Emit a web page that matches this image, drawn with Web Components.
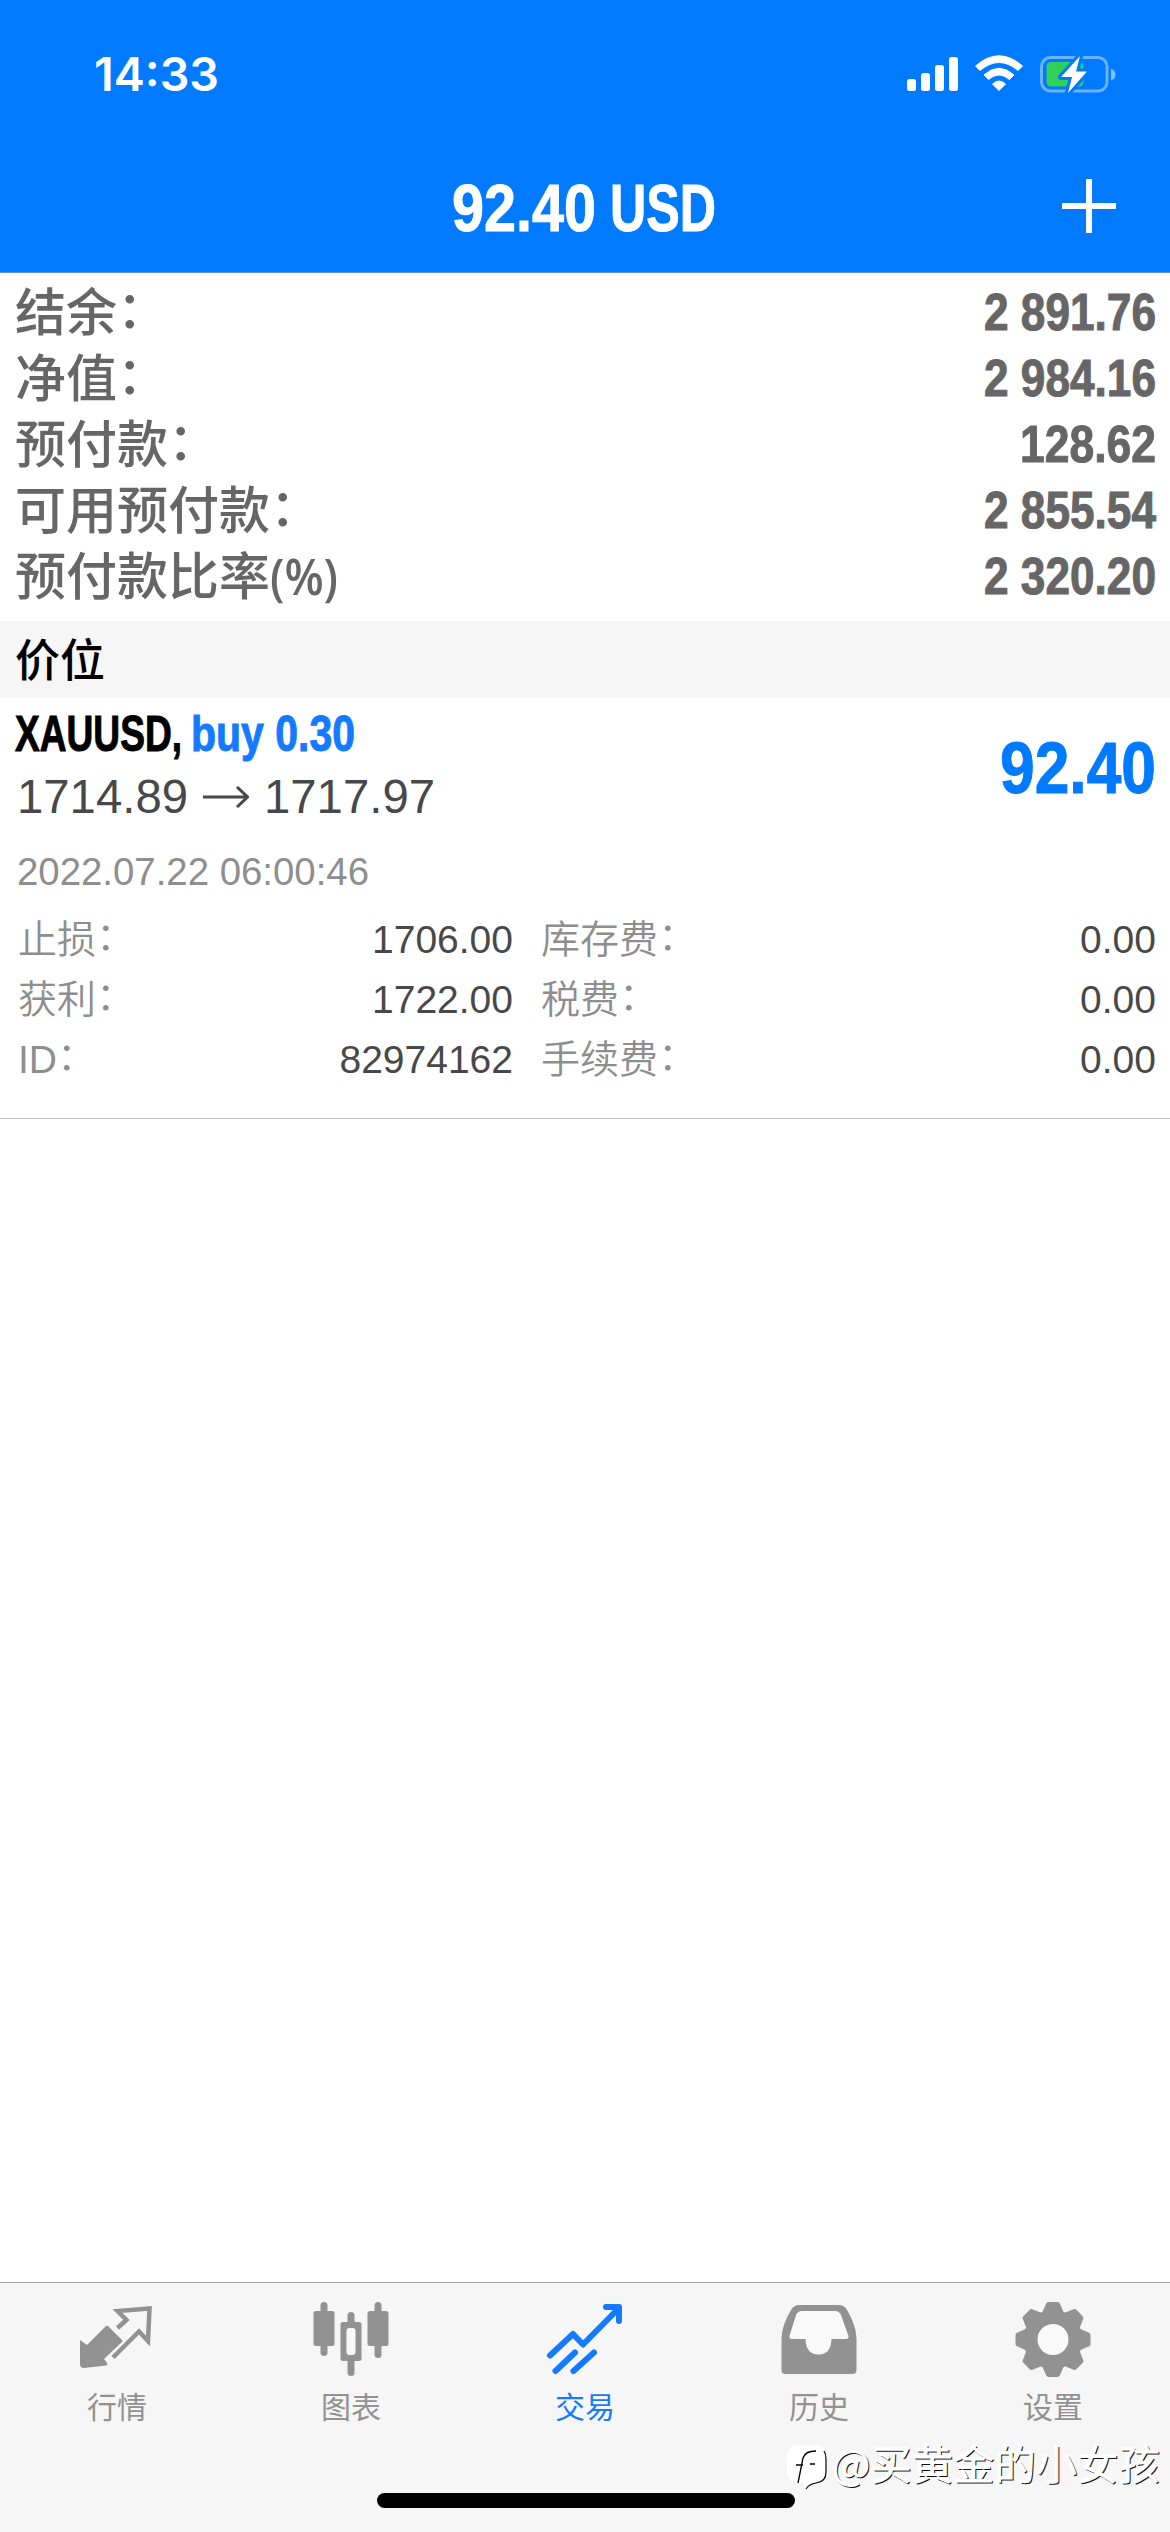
<!DOCTYPE html>
<html lang="zh-CN">
<head>
<meta charset="utf-8">
<title>Trade</title>
<style>
  html, body { margin: 0; padding: 0; }
  body {
    background: #fff;
    font-family: "Liberation Sans", "Noto Sans CJK SC", sans-serif;
  }
</style>
</head>
<body>
<trade-app></trade-app>

<script>
// Single line of text squeezed or stretched to a given width
class FitText extends HTMLElement {
  constructor() {
    super();
    this._shadowRoot = this.attachShadow({ mode: 'open' });
    this._shadowRoot.innerHTML = `
      <style>
        :host { display: inline-block; white-space: nowrap; }
        span { display: inline-block; transform-origin: 0 50%; }
      </style>
      <span><slot></slot></span>
    `;
  }

  connectedCallback() {
    const width = Number(this.getAttribute('width'));
    this.style.width = width + 'px';
    const span = this._shadowRoot.querySelector('span');
    const natural = span.getBoundingClientRect().width;
    if (natural) {
      span.style.transform = `scaleX(${width / natural})`;
    }
  }
}

class StatusBar extends HTMLElement {
  constructor() {
    super();
    this._shadowRoot = this.attachShadow({ mode: 'open' });
    this._shadowRoot.innerHTML = `
      <style>
        :host {
          display: flex;
          justify-content: space-between;
          align-items: center;
          height: 148px;
          padding: 0 54px 0 94px;
          color: #fff;
        }
        .time { font: 600 46px/60px Inter, sans-serif; }
        svg { display: block; }
      </style>
      <fit-text class="time" width="125">14:33</fit-text>
      <svg width="210" height="40" viewBox="906 54 210 40">
        <g fill="#fff">
          <rect x="907" y="79" width="9" height="12" rx="2.5"/>
          <rect x="921" y="73" width="9" height="18" rx="2.5"/>
          <rect x="935" y="65" width="9" height="26" rx="2.5"/>
          <rect x="949" y="57" width="9" height="34" rx="2.5"/>
          <path d="M975.500 66Q999 45.500 1022.500 66L1018 70.500Q999 54.500 980 70.500Z" stroke="#fff" stroke-width="1" stroke-linejoin="round"/>
          <path d="M984 75Q999 61.500 1014 75L1009.500 79.500Q999 70.500 988.500 79.500Z" stroke="#fff" stroke-width="1" stroke-linejoin="round"/>
          <path d="M992.500 84Q999 78 1005.500 84L999 90.500Z" stroke="#fff" stroke-width="1" stroke-linejoin="round"/>
        </g>
        <rect x="1041.500" y="57.500" width="65.500" height="33.500" rx="9" fill="none" stroke="#fff" stroke-opacity=".42" stroke-width="3"/>
        <path d="M1111 68.500Q1115.500 70 1115.500 74.500T1111 80.500Z" fill="#fff" fill-opacity=".5"/>
        <rect x="1046.500" y="62" width="37" height="24.500" rx="4.500" fill="#30d158"/>
        <path d="M1080 56L1061 77H1072L1068 93L1087 71.500H1076Z" fill="#fff" stroke="#007aff" stroke-width="6" stroke-linejoin="round" paint-order="stroke"/>
      </svg>
    `;
  }
}

class NavBar extends HTMLElement {
  constructor() {
    super();
    this._shadowRoot = this.attachShadow({ mode: 'open' });
    this._shadowRoot.innerHTML = `
      <style>
        :host {
          display: grid;
          grid-template-columns: 1fr auto 1fr;
          align-items: center;
          height: 124px;
          padding: 0 54px 0 51px;
          box-sizing: border-box;
          color: #fff;
        }
        .title {
          grid-column: 2;
          display: flex;
          gap: 14px;
          margin-bottom: 4px;
          font: bold 67px/80px "Liberation Sans", sans-serif;
          -webkit-text-stroke: 1px currentColor;
        }
        svg { justify-self: end; margin-bottom: 8px; }
      </style>
      <div class="title"><slot></slot></div>
      <svg width="54" height="54" viewBox="0 0 54 54">
        <path d="M27 0V54M0 27H54" stroke="#fff" stroke-width="6"/>
      </svg>
    `;
  }
}

class SummaryRow extends HTMLElement {
  constructor() {
    super();
    this._shadowRoot = this.attachShadow({ mode: 'open' });
    this._shadowRoot.innerHTML = `
      <style>
        :host {
          display: flex;
          justify-content: space-between;
          height: 66px;
          padding: 0 14px 0 15px;
          color: #666;
        }
        .label { font: 500 51px/60px "Noto Sans CJK SC", sans-serif; white-space: nowrap; }
        .value { font: bold 52px/66px "Liberation Sans", sans-serif; -webkit-text-stroke: 1px currentColor; }
        ::slotted(.colon) { display: inline-block; transform: translateY(-3px); }
        ::slotted(.percent) { font-family: "Open Sans", sans-serif; font-weight: 600; }
      </style>
      <div class="label"><slot></slot></div>
      <fit-text class="value" width="${this.getAttribute('width')}">${this.getAttribute('value')}</fit-text>
    `;
  }
}

class SectionHeader extends HTMLElement {
  constructor() {
    super();
    this._shadowRoot = this.attachShadow({ mode: 'open' });
    this._shadowRoot.innerHTML = `
      <style>
        :host {
          display: block;
          height: 77px;
          padding-left: 15px;
          background: #f6f6f6;
          color: #000;
          font: 500 45px/73px "Noto Sans CJK SC", sans-serif;
        }
      </style>
      <slot></slot>
    `;
  }
}

class PositionField extends HTMLElement {
  constructor() {
    super();
    this._shadowRoot = this.attachShadow({ mode: 'open' });
    this._shadowRoot.innerHTML = `
      <style>
        :host {
          display: flex;
          justify-content: space-between;
          height: 60px;
          line-height: 60px;
          font-size: 39px;
        }
        .label { color: #8e8e8e; font-weight: 350; font-family: "Liberation Sans", "Noto Sans CJK SC", sans-serif; }
        .value { color: #48484a; }
        .colon { display: inline-block; transform: translateY(-3px); }
      </style>
      <span class="label"><slot></slot><span class="colon">：</span></span>
      <span class="value">${this.getAttribute('value')}</span>
    `;
  }
}

class PositionCard extends HTMLElement {
  constructor() {
    super();
    this._shadowRoot = this.attachShadow({ mode: 'open' });
    this._shadowRoot.innerHTML = `
      <style>
        :host {
          display: block;
          height: 421px;
          padding: 0 14px 0 17px;
          box-sizing: border-box;
          border-bottom: 1px solid #c4c4c6;
        }
        .top { display: flex; justify-content: space-between; align-items: flex-start; }
        .symbol {
          display: flex;
          gap: 9px;
          margin: 8px 0 0 -2px;
          font: bold 50px/56px "Liberation Sans", sans-serif;
          -webkit-text-stroke: 1px currentColor;
        }
        .side { color: #147aff; }
        .prices {
          display: flex;
          align-items: center;
          gap: 15px;
          margin-top: 7px;
          color: #48484a;
          font-size: 48px;
          line-height: 56px;
        }
        .profit {
          margin-top: 28px;
          color: #007aff;
          font: bold 73px/84px "Liberation Sans", sans-serif;
          -webkit-text-stroke: 1px currentColor;
        }
        .date { margin-top: 22px; color: #8e8e8e; font-size: 39px; line-height: 50px; }
        .fields {
          display: grid;
          grid-template-columns: 495px 1fr;
          column-gap: 28px;
          padding-left: 1px;
          margin-top: 13px;
        }
      </style>
      <div class="top">
        <div>
          <div class="symbol">
            <fit-text width="167">XAUUSD,</fit-text>
            <fit-text class="side" width="164">buy 0.30</fit-text>
          </div>
          <div class="prices">
            <fit-text width="171">1714.89</fit-text>
            <svg width="46" height="22" viewBox="0 0 46 22">
              <path d="M0 11H44M34 1L44.500 11L34 21" fill="none" stroke="#48484a" stroke-width="3"/>
            </svg>
            <fit-text width="171">1717.97</fit-text>
          </div>
        </div>
        <fit-text class="profit" width="156">92.40</fit-text>
      </div>
      <div class="date"><fit-text width="352">2022.07.22 06:00:46</fit-text></div>
      <div class="fields">
        <position-field value="1706.00">止损</position-field>
        <position-field value="0.00">库存费</position-field>
        <position-field value="1722.00">获利</position-field>
        <position-field value="0.00">税费</position-field>
        <position-field value="82974162">ID</position-field>
        <position-field value="0.00">手续费</position-field>
      </div>
    `;
  }
}

class TabItem extends HTMLElement {
  constructor() {
    super();
    this._shadowRoot = this.attachShadow({ mode: 'open' });
    this._shadowRoot.innerHTML = `
      <style>
        :host {
          display: flex;
          flex-direction: column;
          align-items: center;
          flex: 1;
          padding-top: 17px;
          color: #929292;
          font: 400 30px/40px "Noto Sans CJK SC", sans-serif;
        }
        :host([active]) { color: #147aff; }
        .label { margin-top: 5px; }
      </style>
      <slot name="icon"></slot>
      <span class="label"><slot></slot></span>
    `;
  }
}

class TabBar extends HTMLElement {
  constructor() {
    super();
    this._shadowRoot = this.attachShadow({ mode: 'open' });
    this._shadowRoot.innerHTML = `
      <style>
        :host {
          display: flex;
          flex-direction: column;
          height: 250px;
          box-sizing: border-box;
          background: #f6f6f6;
          border-top: 1px solid #a8a8aa;
        }
        .tabs { display: flex; }
        .home {
          width: 418px;
          height: 15px;
          margin: auto auto 24px 377px;
          border-radius: 8px;
          background: #000;
        }
      </style>
      <div class="tabs">
        <tab-item>
          <svg slot="icon" width="80" height="80" viewBox="0 0 80 80" fill="none">
            <path d="M32 27L45 40Q46 41 45 42L27 59L30 63Q31 65 29 65.500L7 68Q3 68 3 64V40L10 45L29 26Q30.500 25 32 27Z" fill="currentColor"/>
            <path d="M40.500 28L49.500 20L40.500 11L72.500 8.500L71 41L62 31.500L36 57.500" stroke="currentColor" stroke-width="4.500"/>
          </svg>行情
        </tab-item>
        <tab-item>
          <svg slot="icon" width="80" height="80" viewBox="0 0 80 80" fill="currentColor">
            <rect x="9.500" y="2" width="7" height="54" rx="3.500"/>
            <rect x="2.500" y="11" width="21" height="35" rx="2.500"/>
            <rect x="63.500" y="2" width="7" height="56" rx="3.500"/>
            <rect x="56.500" y="11" width="21" height="35" rx="2.500"/>
            <rect x="36.500" y="12" width="7" height="64" rx="3.500"/>
            <rect x="29.500" y="22" width="21" height="39" rx="2.500"/>
            <rect x="35.500" y="28" width="9" height="27" rx="3" fill="#f9f9f9"/>
          </svg>图表
        </tab-item>
        <tab-item active>
          <svg slot="icon" width="80" height="80" viewBox="0 0 80 80" fill="none" stroke="currentColor" stroke-width="6" stroke-linecap="round" stroke-linejoin="round">
            <path d="M5 55.500L28 34L38 44.500L73 9M61 7H74V21"/>
            <path d="M10.500 71L30 52.500M28.500 71L49 52.500"/>
          </svg>交易
        </tab-item>
        <tab-item>
          <svg slot="icon" width="80" height="80" viewBox="0 0 80 80">
            <path d="M20 5H60Q65 5 68 10Q77 25 77.500 38V70Q77.500 74 73.500 74H6.500Q2.500 74 2.500 70V38Q3 25 12 10Q15 5 20 5Z" fill="currentColor"/>
            <path d="M23 11H56Q60 11 62 15L69.500 36Q70 39 67 39H52.500Q52 54.500 39.500 54.500T26.500 39H13Q10 39 10.500 36L17 15Q19 11 23 11Z" fill="#f9f9f9"/>
          </svg>历史
        </tab-item>
        <tab-item>
          <svg slot="icon" width="80" height="80" viewBox="0 0 80 80">
            <g fill="currentColor" stroke="currentColor" stroke-width="5" stroke-linejoin="round">
              <circle cx="40" cy="39.500" r="27"/>
              <path d="M35.500 4.500H44.500L50 17H30Z"/>
              <path d="M35.500 4.500H44.500L50 17H30Z" transform="rotate(45 40 39.500)"/>
              <path d="M35.500 4.500H44.500L50 17H30Z" transform="rotate(90 40 39.500)"/>
              <path d="M35.500 4.500H44.500L50 17H30Z" transform="rotate(135 40 39.500)"/>
              <path d="M35.500 4.500H44.500L50 17H30Z" transform="rotate(180 40 39.500)"/>
              <path d="M35.500 4.500H44.500L50 17H30Z" transform="rotate(225 40 39.500)"/>
              <path d="M35.500 4.500H44.500L50 17H30Z" transform="rotate(270 40 39.500)"/>
              <path d="M35.500 4.500H44.500L50 17H30Z" transform="rotate(315 40 39.500)"/>
            </g>
            <circle cx="40" cy="39.500" r="15.500" fill="#f9f9f9"/>
          </svg>设置
        </tab-item>
      </div>
      <div class="home"></div>
    `;
  }
}

// Author mark lying over the lower right corner
class AuthorMark extends HTMLElement {
  constructor() {
    super();
    this._shadowRoot = this.attachShadow({ mode: 'open' });
    this._shadowRoot.innerHTML = `
      <style>
        :host {
          position: absolute;
          right: 10px;
          top: 2432px;
          display: flex;
          align-items: center;
          gap: 4px;
          color: #fff;
          font: 350 41px/60px "Noto Sans CJK SC", sans-serif;
          text-shadow: -1px -1px 0 #fff, 1px 1px 0 #111;
        }
        svg { margin-top: 12px; }
      </style>
      <svg width="42" height="48" viewBox="0 0 42 48">
        <path d="M12 1H28Q40 1 40 13V28Q40 38 30 39Q23 40 20 45Q19 39 12 39Q1 37 1 27V13Q1 1 12 1Z" fill="#fff"/>
        <path d="M38 7Q40 10 40 15V28Q40 38 30 39Q23 40 20 45" fill="none" stroke="#000" stroke-width="1.200"/>
        <path d="M12 39L17 14Q19 7 30 7M10 21H17M24 20H29" fill="none" stroke="#000" stroke-width="1.300"/>
      </svg>
      <fit-text width="328"><slot></slot></fit-text>
    `;
  }
}

class TradeApp extends HTMLElement {
  constructor() {
    super();
    this._shadowRoot = this.attachShadow({ mode: 'open' });
    this._shadowRoot.innerHTML = `
      <style>
        :host {
          position: relative;
          display: flex;
          flex-direction: column;
          width: 1170px;
          height: 2532px;
          overflow: hidden;
          background: #fff;
        }
        header { background: #007aff; border-bottom: 1px solid #5a8fc8; }
        .summary { padding: 6px 0 12px; height: 330px; }
        main { flex: 1; }
      </style>
      <header>
        <status-bar></status-bar>
        <nav-bar><fit-text width="144">92.40</fit-text> <fit-text width="106">USD</fit-text></nav-bar>
      </header>
      <main>
        <div class="summary">
          <summary-row value="2 891.76" width="172">结余<span class="colon">：</span></summary-row>
          <summary-row value="2 984.16" width="172">净值<span class="colon">：</span></summary-row>
          <summary-row value="128.62" width="136">预付款<span class="colon">：</span></summary-row>
          <summary-row value="2 855.54" width="172">可用预付款<span class="colon">：</span></summary-row>
          <summary-row value="2 320.20" width="172">预付款比率<fit-text class="percent" width="68">(%)</fit-text></summary-row>
        </div>
        <section-header>价位</section-header>
        <position-card></position-card>
      </main>
      <tab-bar></tab-bar>
      <author-mark>@买黄金的小女孩</author-mark>
    `;
  }
}

customElements.define('section-header', SectionHeader);
customElements.define('summary-row', SummaryRow);
customElements.define('status-bar', StatusBar);
customElements.define('nav-bar', NavBar);
customElements.define('position-field', PositionField);
customElements.define('position-card', PositionCard);
customElements.define('tab-item', TabItem);
customElements.define('tab-bar', TabBar);
customElements.define('author-mark', AuthorMark);
customElements.define('trade-app', TradeApp);
customElements.define('fit-text', FitText);
</script>
</body>
</html>
